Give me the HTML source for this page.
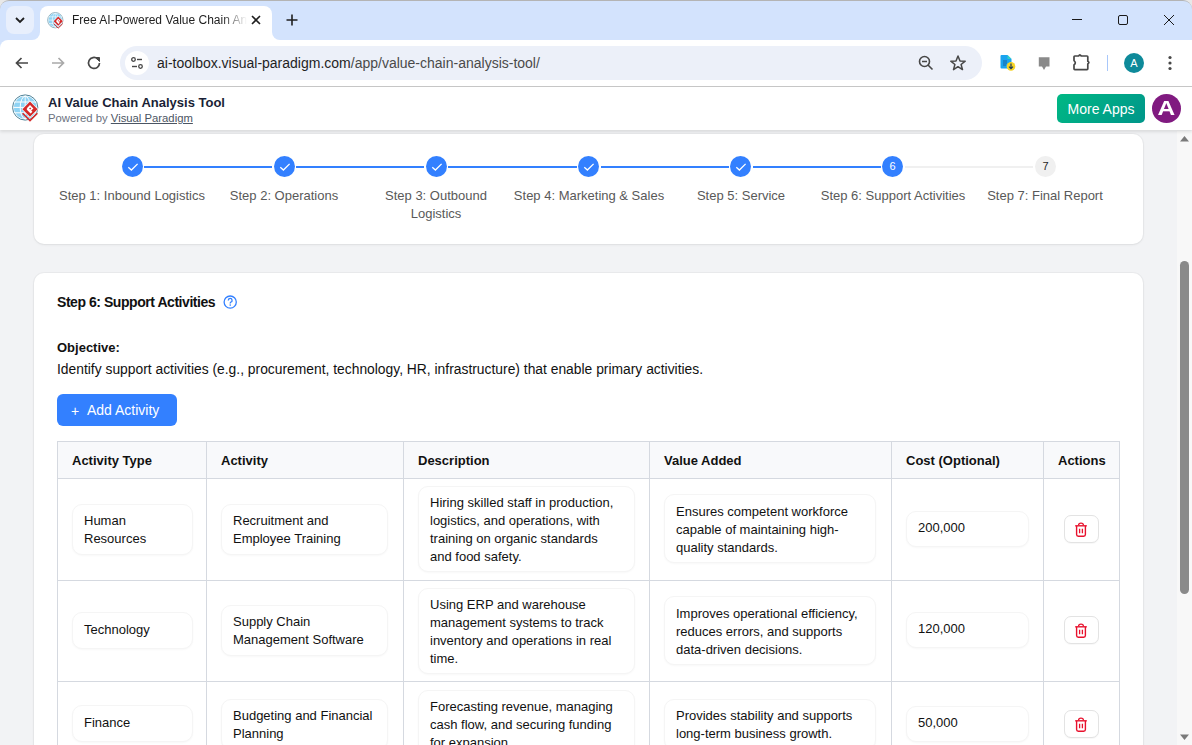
<!DOCTYPE html>
<html><head><meta charset="utf-8">
<style>
*{box-sizing:border-box;margin:0;padding:0}
html,body{width:1192px;height:745px;overflow:hidden;font-family:"Liberation Sans",sans-serif;background:#f2f3f5;position:relative}
.abs{position:absolute}
#tabstrip{left:0;top:0;width:1192px;height:40px;background:#d3e3fd}
#toolbar{left:0;top:40px;width:1192px;height:47px;background:#fff;border-bottom:1px solid #c7c7c7}
#omni{left:120px;top:46px;width:862px;height:34px;border-radius:17px;background:#ecf0f9}
#apphdr{left:0;top:87px;width:1192px;height:43px;background:#fff;box-shadow:0 2px 3px rgba(0,0,0,0.10)}
.card{background:#fff;border-radius:10px;box-shadow:0 0 0 1px rgba(0,0,0,0.03),0 1px 3px rgba(0,0,0,0.06)}
#scroll{left:1177px;top:131px;width:15px;height:614px;background:#f8f8f8}
.t{position:absolute;white-space:nowrap;line-height:1}
.step-c{position:absolute;width:21px;height:21px;border-radius:50%;top:156px}
.step-l{position:absolute;top:187px;font-size:13px;color:#595959;text-align:center;line-height:18px;width:152px}
.box{position:absolute;border:1px solid #f5f5f5;border-radius:10px;background:#fff;font-size:13px;line-height:18px;color:#111;padding:0 11px;display:flex;flex-direction:column;justify-content:center;white-space:nowrap;box-shadow:0 1px 2px rgba(0,0,0,0.03)}
.line{position:absolute;top:166px;height:2px}
</style></head><body>
<!-- window top border -->
<div class="abs" style="left:0;top:0;width:1192px;height:40px;background:#e8e8e8"></div>
<div id="tabstrip" class="abs" style="top:0;height:40px;border-top:1px solid #b4b4b4;border-radius:9px 9px 0 0"></div>
<!-- chevron button -->
<div class="abs" style="left:6px;top:6px;width:28px;height:28px;border-radius:8px;background:#e8effc"></div>
<svg class="abs" style="left:14px;top:15px" width="12" height="10" viewBox="0 0 12 10"><path d="M2 3 L6 7 L10 3" fill="none" stroke="#1f1f1f" stroke-width="1.8"/></svg>
<!-- active tab -->
<div class="abs" style="left:40px;top:6px;width:232px;height:34px;background:#fff;border-radius:8px 8px 0 0"></div>
<div class="abs" style="left:32px;top:32px;width:8px;height:8px;background:#fff"></div>
<div class="abs" style="left:32px;top:32px;width:8px;height:8px;background:#d3e3fd;border-radius:0 0 8px 0"></div>
<div class="abs" style="left:272px;top:32px;width:8px;height:8px;background:#fff"></div>
<div class="abs" style="left:272px;top:32px;width:8px;height:8px;background:#d3e3fd;border-radius:0 0 0 8px"></div>
<!-- favicon -->
<svg class="abs" style="left:47px;top:12px" width="17" height="17" viewBox="11.5 94 28 28">
<circle cx="25.2" cy="107.5" r="12.6" fill="none" stroke="#4e8196" stroke-width="1"/>
<circle cx="25.2" cy="107.5" r="11.3" fill="#8fd3f4"/>
<path d="M14 102 H36 M13.9 107.4 H36.5 M14.5 112.8 H36" stroke="#fff" stroke-width="1"/>
<ellipse cx="25.2" cy="107.5" rx="5" ry="11.3" fill="none" stroke="#fff" stroke-width="1"/>
<path d="M25.2 96.2 V118.8" stroke="#fff" stroke-width="0.9"/>
<path d="M30 100.8 L38.4 109.2 L30 117.6 L21.6 109.2Z" fill="#fff"/>
<path d="M30 101.6 L37.6 109.2 L30 116.8 L22.4 109.2Z" fill="#d42a2a"/>
<path d="M22.6 113.2 L30 120.6 L37.4 113.2" fill="none" stroke="#d42a2a" stroke-width="1.6"/>
<path d="M30 105 L33.4 108.4 L31.2 110.6 L32.4 111.8 L30.6 113.6 L26.6 109.6 L27.4 108.8 L26.6 108.4Z" fill="#fff"/>
<path d="M30.2 107.4 L31.3 108.5 L30.2 109.6 L29.1 108.5Z" fill="#d42a2a"/>
</svg>
<div class="t" style="left:72px;top:14px;font-size:12px;color:#1f1f1f;width:175px;overflow:hidden;-webkit-mask-image:linear-gradient(90deg,#000 150px,transparent 175px)">Free AI-Powered Value Chain Analysis Tool</div>
<svg class="abs" style="left:250px;top:14px" width="12" height="12" viewBox="0 0 12 12"><path d="M2 2 L10 10 M10 2 L2 10" stroke="#1f1f1f" stroke-width="1.6"/></svg>
<svg class="abs" style="left:285px;top:13px" width="14" height="14" viewBox="0 0 14 14"><path d="M7 1.5 V12.5 M1.5 7 H12.5" stroke="#1f1f1f" stroke-width="1.6"/></svg>
<!-- window controls -->
<svg class="abs" style="left:1066px;top:10px" width="22" height="20" viewBox="1066 10 22 20"><path d="M1072 19.5 H1082" stroke="#1a1a1a" stroke-width="1"/></svg>
<svg class="abs" style="left:1112px;top:10px" width="22" height="20" viewBox="1112 10 22 20"><rect x="1118.5" y="15.5" width="9" height="9" rx="1.5" fill="none" stroke="#1a1a1a" stroke-width="1"/></svg>
<svg class="abs" style="left:1158px;top:10px" width="22" height="20" viewBox="1158 10 22 20"><path d="M1164 15 L1174 25 M1174 15 L1164 25" stroke="#1a1a1a" stroke-width="1"/></svg>

<div id="toolbar" class="abs"></div>
<div class="abs" style="left:0;top:40px;width:8px;height:8px;background:#d3e3fd"></div>
<div class="abs" style="left:0;top:40px;width:8px;height:8px;background:#fff;border-radius:8px 0 0 0"></div>
<!-- nav icons -->
<svg class="abs" style="left:13px;top:54px" width="18" height="18" viewBox="0 0 18 18"><path d="M15 9 H3.5 M8.5 4 L3.5 9 L8.5 14" fill="none" stroke="#474747" stroke-width="1.7"/></svg>
<svg class="abs" style="left:49px;top:54px" width="18" height="18" viewBox="0 0 18 18"><path d="M3 9 H14.5 M9.5 4 L14.5 9 L9.5 14" fill="none" stroke="#a9a9a9" stroke-width="1.7"/></svg>
<svg class="abs" style="left:85px;top:54px" width="18" height="18" viewBox="0 0 18 18"><path d="M14.5 9 A5.5 5.5 0 1 1 12.6 4.8" fill="none" stroke="#474747" stroke-width="1.7"/><path d="M10.5 3.5 L14.5 3.5 L14.5 7.5Z" fill="#474747" stroke="#474747" stroke-width="1"/></svg>
<div id="omni" class="abs"></div>
<div class="abs" style="left:125px;top:51px;width:24px;height:24px;border-radius:50%;background:#fff"></div>
<svg class="abs" style="left:129px;top:55px" width="16" height="16" viewBox="0 0 16 16"><circle cx="4.5" cy="4.5" r="1.8" fill="none" stroke="#474747" stroke-width="1.3"/><path d="M8 4.5 H13" stroke="#474747" stroke-width="1.4"/><circle cx="11.5" cy="11.5" r="1.8" fill="none" stroke="#474747" stroke-width="1.3"/><path d="M3 11.5 H8" stroke="#474747" stroke-width="1.4"/></svg>
<div class="t" style="left:157px;top:56px;font-size:14px;color:#1f1f1f">ai-toolbox.visual-paradigm.com<span style="color:#4a4a4a">/app/value-chain-analysis-tool/</span></div>
<svg class="abs" style="left:917px;top:54px" width="18" height="18" viewBox="0 0 18 18"><circle cx="7.5" cy="7.5" r="5" fill="none" stroke="#474747" stroke-width="1.6"/><path d="M5 7.5 H10 M11 11 L15.5 15.5" stroke="#474747" stroke-width="1.6"/></svg>
<svg class="abs" style="left:949px;top:54px" width="18" height="18" viewBox="0 0 18 18"><path d="M9 2 L11 7 L16.2 7.2 L12.1 10.5 L13.5 15.6 L9 12.7 L4.5 15.6 L5.9 10.5 L1.8 7.2 L7 7Z" fill="none" stroke="#474747" stroke-width="1.5" stroke-linejoin="round"/></svg>
<!-- ext icons -->
<svg class="abs" style="left:995px;top:50px" width="24" height="24" viewBox="0 0 24 24"><path d="M6.5 5 H12.5 L16.5 9 V17.5 Q16.5 18.5 15.5 18.5 H6.5 Q5.5 18.5 5.5 17.5 V6 Q5.5 5 6.5 5Z" fill="#1aa3ef"/><path d="M12.5 5 L16.5 9 H12.5Z" fill="#2fd0c8"/><path d="M8 11 H12 M8 13 H12 M8 15 H11" stroke="#1a5f9a" stroke-width="0.9"/><circle cx="16" cy="16.4" r="4.3" fill="#f7d427"/><path d="M16 13.6 V18.6 M14 16.6 L16 18.6 L18 16.6" fill="none" stroke="#1f3a5a" stroke-width="1.2"/></svg>
<svg class="abs" style="left:1035px;top:54px" width="18" height="18" viewBox="0 0 18 18"><path d="M3.8 3.2 H14.5 V12.4 H11 L9 16 L7 12.4 H3.8Z" fill="#8a8a8a"/></svg>
<svg class="abs" style="left:1071px;top:52px" width="20" height="20" viewBox="0 0 20 20"><path d="M3 4.8 Q3 4 3.8 4 H7.6 Q8.9 1.6 10.2 4 H16 Q16.8 4 16.8 4.8 V9.3 Q19 10.6 16.8 11.9 V16.8 Q16.8 17.6 16 17.6 H3.8 Q3 17.6 3 16.8 V13 Q5.6 10.8 3 8.6Z" fill="none" stroke="#474747" stroke-width="1.7" stroke-linejoin="round"/></svg>
<div class="abs" style="left:1107px;top:55px;width:1px;height:16px;background:#a8c7fa"></div>
<div class="abs" style="left:1124px;top:53px;width:20px;height:20px;border-radius:50%;background:#0e8a9a;color:#fff;font-size:11px;text-align:center;line-height:20px">A</div>
<svg class="abs" style="left:1162px;top:54px" width="16" height="18" viewBox="0 0 16 18"><circle cx="8" cy="3.5" r="1.6" fill="#474747"/><circle cx="8" cy="9" r="1.6" fill="#474747"/><circle cx="8" cy="14.5" r="1.6" fill="#474747"/></svg>

<!-- scrollbar -->
<div id="scroll" class="abs"></div>
<svg class="abs" style="left:1179px;top:134px" width="11" height="9" viewBox="0 0 11 9"><path d="M1 7.5 L5.5 2 L10 7.5Z" fill="#7a7a7a"/></svg>
<div class="abs" style="left:1180px;top:261px;width:9px;height:333px;border-radius:5px;background:#8a8a8a"></div>
<svg class="abs" style="left:1179px;top:733px" width="11" height="9" viewBox="0 0 11 9"><path d="M1 1.5 L5.5 7 L10 1.5Z" fill="#7a7a7a"/></svg>

<!-- app header -->
<div id="apphdr" class="abs"></div>
<svg class="abs" style="left:8px;top:90px" width="36" height="36" viewBox="8 90 36 36">
<circle cx="25.2" cy="107.5" r="12.6" fill="none" stroke="#4e8196" stroke-width="1"/>
<circle cx="25.2" cy="107.5" r="11.3" fill="#8fd3f4"/>
<path d="M14 102 H36 M13.9 107.4 H36.5 M14.5 112.8 H36" stroke="#fff" stroke-width="1"/>
<ellipse cx="25.2" cy="107.5" rx="5" ry="11.3" fill="none" stroke="#fff" stroke-width="1"/>
<path d="M25.2 96.2 V118.8" stroke="#fff" stroke-width="0.9"/>
<path d="M30 100.8 L38.4 109.2 L30 117.6 L21.6 109.2Z" fill="#fff"/>
<path d="M30 101.6 L37.6 109.2 L30 116.8 L22.4 109.2Z" fill="#d42a2a"/>
<path d="M22.6 113.2 L30 120.6 L37.4 113.2" fill="none" stroke="#d42a2a" stroke-width="1.6"/>
<path d="M30 105 L33.4 108.4 L31.2 110.6 L32.4 111.8 L30.6 113.6 L26.6 109.6 L27.4 108.8 L26.6 108.4Z" fill="#fff"/>
<path d="M30.2 107.4 L31.3 108.5 L30.2 109.6 L29.1 108.5Z" fill="#d42a2a"/>
</svg>
<div class="t" style="left:48px;top:96px;font-size:13px;font-weight:700;color:#1a1f36">AI Value Chain Analysis Tool</div>
<div class="t" style="left:48px;top:113px;font-size:11.3px;color:#6b7280">Powered by <span style="text-decoration:underline;color:#4b5563">Visual Paradigm</span></div>
<div class="abs" style="left:1057px;top:94px;width:88px;height:29px;border-radius:5px;background:linear-gradient(135deg,#00b884,#00968a);color:#fff;font-size:14px;text-align:center;line-height:31px">More Apps</div>
<div class="abs" style="left:1152px;top:94px;width:29px;height:29px;border-radius:50%;background:#801a80;color:#fff;font-size:20px;font-weight:700;text-align:center;line-height:28px"><span style="display:inline-block;transform:scaleX(1.22)">A</span></div>

<!-- steps card -->
<div class="card abs" style="left:34px;top:134px;width:1109px;height:110px"></div>
<div class="step-c" style="left:122px;background:#3380ff"></div>
<svg class="abs" style="left:126.5px;top:160.5px" width="12" height="12" viewBox="0 0 12 12"><path d="M1.3 6.2 L4.4 9 L10.6 2.9" fill="none" stroke="#fff" stroke-width="1.3"/></svg>
<div class="step-l" style="left:56px">Step 1: Inbound Logistics</div>
<div class="line" style="left:144px;width:128px;background:#3380ff"></div>
<div class="step-c" style="left:274px;background:#3380ff"></div>
<svg class="abs" style="left:278.5px;top:160.5px" width="12" height="12" viewBox="0 0 12 12"><path d="M1.3 6.2 L4.4 9 L10.6 2.9" fill="none" stroke="#fff" stroke-width="1.3"/></svg>
<div class="step-l" style="left:208px">Step 2: Operations</div>
<div class="line" style="left:296px;width:128px;background:#3380ff"></div>
<div class="step-c" style="left:426px;background:#3380ff"></div>
<svg class="abs" style="left:430.5px;top:160.5px" width="12" height="12" viewBox="0 0 12 12"><path d="M1.3 6.2 L4.4 9 L10.6 2.9" fill="none" stroke="#fff" stroke-width="1.3"/></svg>
<div class="step-l" style="left:360px">Step 3: Outbound<br>Logistics</div>
<div class="line" style="left:448px;width:129px;background:#3380ff"></div>
<div class="step-c" style="left:578px;background:#3380ff"></div>
<svg class="abs" style="left:582.5px;top:160.5px" width="12" height="12" viewBox="0 0 12 12"><path d="M1.3 6.2 L4.4 9 L10.6 2.9" fill="none" stroke="#fff" stroke-width="1.3"/></svg>
<div class="step-l" style="left:513px">Step 4: Marketing &amp; Sales</div>
<div class="line" style="left:601px;width:128px;background:#3380ff"></div>
<div class="step-c" style="left:730px;background:#3380ff"></div>
<svg class="abs" style="left:734.5px;top:160.5px" width="12" height="12" viewBox="0 0 12 12"><path d="M1.3 6.2 L4.4 9 L10.6 2.9" fill="none" stroke="#fff" stroke-width="1.3"/></svg>
<div class="step-l" style="left:665px">Step 5: Service</div>
<div class="line" style="left:753px;width:128px;background:#3380ff"></div>
<div class="step-c" style="left:882px;background:#3380ff;color:#fff;font-size:11px;line-height:21px;text-align:center">6</div>
<div class="step-l" style="left:817px">Step 6: Support Activities</div>
<div class="line" style="left:905px;width:128px;background:#f0f0f0"></div>
<div class="step-c" style="left:1035px;background:#f0f0f0;color:#1f1f1f;font-size:11px;line-height:21px;text-align:center">7</div>
<div class="step-l" style="left:969px">Step 7: Final Report</div>

<!-- main card -->
<div class="card abs" style="left:34px;top:273px;width:1109px;height:560px"></div>
<div class="t" style="left:57px;top:295px;font-size:14px;letter-spacing:-0.45px;font-weight:700;color:#111">Step 6: Support Activities</div>
<svg class="abs" style="left:222px;top:294px" width="16" height="16" viewBox="0 0 16 16"><circle cx="8.2" cy="8.1" r="6.1" fill="none" stroke="#3380ff" stroke-width="1.3"/><path d="M6.3 6.4 A1.9 1.9 0 1 1 8.7 8.2 Q8.2 8.5 8.2 9.4" fill="none" stroke="#3380ff" stroke-width="1.3"/><circle cx="8.2" cy="11.1" r="0.8" fill="#3380ff"/></svg>
<div class="t" style="left:57px;top:341px;font-size:13px;font-weight:700;color:#111">Objective:</div>
<div class="t" style="left:57px;top:363px;font-size:13.85px;color:#111">Identify support activities (e.g., procurement, technology, HR, infrastructure) that enable primary activities.</div>
<div class="abs" style="left:57px;top:394px;width:119.5px;height:32px;border-radius:6px;background:#3380ff"></div>
<div class="t" style="left:71px;top:404px;font-size:14px;color:#fff">+</div>
<div class="t" style="left:87px;top:403px;font-size:14px;color:#fff">Add Activity</div>
<div class="abs" style="left:57px;top:441px;width:1063px;height:37px;background:#f8f9fb"></div>
<div class="abs" style="left:57px;top:441px;width:1px;height:304px;background:#d5d9e0"></div>
<div class="abs" style="left:206px;top:441px;width:1px;height:304px;background:#d5d9e0"></div>
<div class="abs" style="left:403px;top:441px;width:1px;height:304px;background:#d5d9e0"></div>
<div class="abs" style="left:649px;top:441px;width:1px;height:304px;background:#d5d9e0"></div>
<div class="abs" style="left:891px;top:441px;width:1px;height:304px;background:#d5d9e0"></div>
<div class="abs" style="left:1043px;top:441px;width:1px;height:304px;background:#d5d9e0"></div>
<div class="abs" style="left:1119px;top:441px;width:1px;height:304px;background:#d5d9e0"></div>
<div class="abs" style="left:57px;top:441px;width:1063px;height:1px;background:#d5d9e0"></div>
<div class="abs" style="left:57px;top:478px;width:1063px;height:1px;background:#d5d9e0"></div>
<div class="abs" style="left:57px;top:580px;width:1063px;height:1px;background:#d5d9e0"></div>
<div class="abs" style="left:57px;top:681px;width:1063px;height:1px;background:#d5d9e0"></div>
<div class="t" style="left:72px;top:454px;font-size:13px;font-weight:700;color:#111">Activity Type</div>
<div class="t" style="left:221px;top:454px;font-size:13px;font-weight:700;color:#111">Activity</div>
<div class="t" style="left:418px;top:454px;font-size:13px;font-weight:700;color:#111">Description</div>
<div class="t" style="left:664px;top:454px;font-size:13px;font-weight:700;color:#111">Value Added</div>
<div class="t" style="left:906px;top:454px;font-size:13px;font-weight:700;color:#111">Cost (Optional)</div>
<div class="t" style="left:1058px;top:454px;font-size:13px;font-weight:700;color:#111">Actions</div>
<div class="box" style="left:72px;top:504px;width:121px;height:51px">Human<br>Resources</div>
<div class="box" style="left:221px;top:504px;width:167px;height:51px">Recruitment and<br>Employee Training</div>
<div class="box" style="left:418px;top:486px;width:217px;height:86px;padding-top:2px">Hiring skilled staff in production,<br>logistics, and operations, with<br>training on organic standards<br>and food safety.</div>
<div class="box" style="left:664px;top:494px;width:212px;height:69px;padding-top:2px">Ensures competent workforce<br>capable of maintaining high-<br>quality standards.</div>
<div class="box" style="left:906px;top:511px;width:123px;height:36px;padding-bottom:2px">200,000</div>
<div class="abs" style="left:1064px;top:515px;width:35px;height:28px;border-radius:7px;border:1px solid #e3e3e3;background:#fff;box-shadow:0 1px 1px rgba(0,0,0,0.03)"></div>
<svg class="abs" style="left:1070px;top:519px" width="22" height="22" viewBox="0 0 22 22"><path d="M8.6 6.2 Q8.6 4.2 11 4.2 Q13.4 4.2 13.4 6.2" fill="none" stroke="#e8112d" stroke-width="1.3"/><path d="M5.2 6.8 H16.8" stroke="#e8112d" stroke-width="1.4"/><path d="M6.6 7 V15.6 Q6.6 17.3 8.3 17.3 H13.7 Q15.4 17.3 15.4 15.6 V7" fill="none" stroke="#e8112d" stroke-width="1.4"/><path d="M9.6 9.8 V14.2 M12.4 9.8 V14.2" stroke="#e8112d" stroke-width="1.3"/></svg>
<div class="box" style="left:72px;top:612px;width:121px;height:37px;padding-bottom:2px">Technology</div>
<div class="box" style="left:221px;top:605px;width:167px;height:51px">Supply Chain<br>Management Software</div>
<div class="box" style="left:418px;top:588px;width:217px;height:86px;padding-top:2px">Using ERP and warehouse<br>management systems to track<br>inventory and operations in real<br>time.</div>
<div class="box" style="left:664px;top:596px;width:212px;height:69px;padding-top:2px">Improves operational efficiency,<br>reduces errors, and supports<br>data-driven decisions.</div>
<div class="box" style="left:906px;top:612px;width:123px;height:36px;padding-bottom:2px">120,000</div>
<div class="abs" style="left:1064px;top:616px;width:35px;height:28px;border-radius:7px;border:1px solid #e3e3e3;background:#fff;box-shadow:0 1px 1px rgba(0,0,0,0.03)"></div>
<svg class="abs" style="left:1070px;top:620px" width="22" height="22" viewBox="0 0 22 22"><path d="M8.6 6.2 Q8.6 4.2 11 4.2 Q13.4 4.2 13.4 6.2" fill="none" stroke="#e8112d" stroke-width="1.3"/><path d="M5.2 6.8 H16.8" stroke="#e8112d" stroke-width="1.4"/><path d="M6.6 7 V15.6 Q6.6 17.3 8.3 17.3 H13.7 Q15.4 17.3 15.4 15.6 V7" fill="none" stroke="#e8112d" stroke-width="1.4"/><path d="M9.6 9.8 V14.2 M12.4 9.8 V14.2" stroke="#e8112d" stroke-width="1.3"/></svg>
<div class="box" style="left:72px;top:705px;width:121px;height:37px;padding-bottom:2px">Finance</div>
<div class="box" style="left:221px;top:699px;width:167px;height:51px">Budgeting and Financial<br>Planning</div>
<div class="box" style="left:418px;top:690px;width:217px;height:69px">Forecasting revenue, managing<br>cash flow, and securing funding<br>for expansion.</div>
<div class="box" style="left:664px;top:699px;width:212px;height:51px">Provides stability and supports<br>long-term business growth.</div>
<div class="box" style="left:906px;top:706px;width:123px;height:36px;padding-bottom:2px">50,000</div>
<div class="abs" style="left:1064px;top:710px;width:35px;height:28px;border-radius:7px;border:1px solid #e3e3e3;background:#fff;box-shadow:0 1px 1px rgba(0,0,0,0.03)"></div>
<svg class="abs" style="left:1070px;top:714px" width="22" height="22" viewBox="0 0 22 22"><path d="M8.6 6.2 Q8.6 4.2 11 4.2 Q13.4 4.2 13.4 6.2" fill="none" stroke="#e8112d" stroke-width="1.3"/><path d="M5.2 6.8 H16.8" stroke="#e8112d" stroke-width="1.4"/><path d="M6.6 7 V15.6 Q6.6 17.3 8.3 17.3 H13.7 Q15.4 17.3 15.4 15.6 V7" fill="none" stroke="#e8112d" stroke-width="1.4"/><path d="M9.6 9.8 V14.2 M12.4 9.8 V14.2" stroke="#e8112d" stroke-width="1.3"/></svg>
</body></html>
